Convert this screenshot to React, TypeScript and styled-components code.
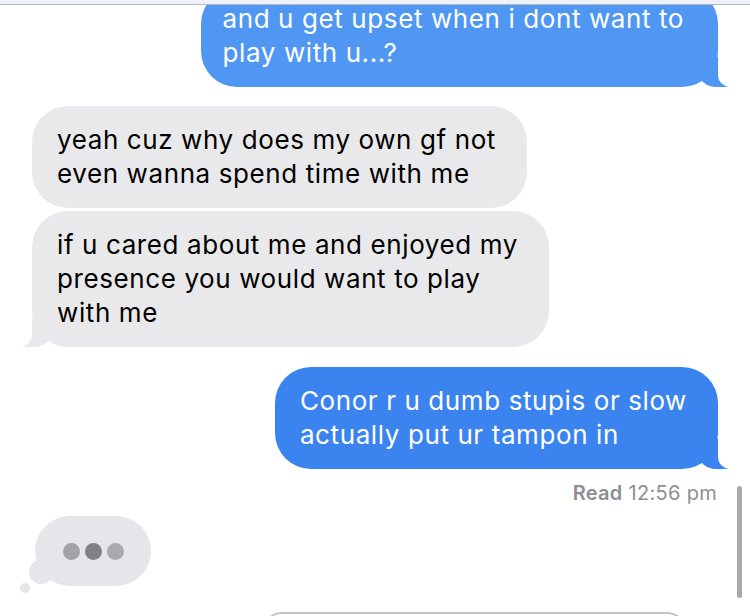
import React from "react";
import styled, { createGlobalStyle, css } from "styled-components";

const GlobalStyle = createGlobalStyle`
  html, body {
    margin: 0;
    padding: 0;
    background: #ffffff;
    overflow: hidden;
  }
  body {
    font-family: Inter, "Noto Sans", "Liberation Sans", sans-serif;
  }
`;

const Screen = styled.div`
  position: relative;
  width: 750px;
  height: 616px;
  overflow: hidden;
  background: #fff;
  display: flex;
  flex-direction: column;
`;

const TopBar = styled.div`
  position: relative;
  z-index: 5;
  height: 4px;
  flex-shrink: 0;
  background: #eef2f8;
  border-bottom: 1px solid #b4b8bf;
`;

const Thread = styled.div`
  display: flex;
  flex-direction: column;
  padding: 0 32px;
`;

const Row = styled.div<{ $mine?: boolean; $gap?: number }>`
  display: flex;
  justify-content: ${(p) => (p.$mine ? "flex-end" : "flex-start")};
  margin-top: ${(p) => p.$gap ?? 0}px;
`;

const Bubble = styled.div<{ $mine?: boolean; $tail?: boolean; $shade?: string }>`
  position: relative;
  padding: 17px 31px 17px 25px;
  border-radius: 36px;
  font-size: 26px;
  line-height: 34px;
  letter-spacing: 0.6px;
  background: ${(p) => (p.$mine ? p.$shade ?? "#3f86f1" : "#e9e9eb")};
  color: ${(p) => (p.$mine ? "#ffffff" : "#000000")};

  ${(p) =>
    p.$tail &&
    p.$mine &&
    css`
      &::before {
        content: "";
        position: absolute;
        bottom: 0;
        right: -10px;
        width: 30px;
        height: 30px;
        background: ${p.$shade ?? "#3f86f1"};
        border-bottom-left-radius: 18px 16px;
      }
      &::after {
        content: "";
        position: absolute;
        bottom: 0;
        right: -30px;
        width: 30px;
        height: 30px;
        background: #fff;
        border-bottom-left-radius: 13px 12px;
      }
    `}

  ${(p) =>
    p.$tail &&
    !p.$mine &&
    css`
      &::before {
        content: "";
        position: absolute;
        bottom: 0;
        left: -10px;
        width: 30px;
        height: 30px;
        background: #e9e9eb;
        border-bottom-right-radius: 18px 16px;
      }
      &::after {
        content: "";
        position: absolute;
        bottom: 0;
        left: -30px;
        width: 30px;
        height: 30px;
        background: #fff;
        border-bottom-right-radius: 13px 12px;
      }
    `}
`;

const Text = styled.span`
  position: relative;
  z-index: 1;
  white-space: nowrap;
`;

const TopBubble = styled(Bubble)`
  margin-top: -17px;
  padding: 14px 34px 17px 22px;
`;

const Receipt = styled.div`
  margin-top: 11px;
  text-align: right;
  font-size: 20px;
  line-height: 26px;
  letter-spacing: 0.3px;
  color: #8e8e93;
  padding-right: 1px;

  b {
    font-weight: 600;
  }
`;

const TypingWrap = styled.div`
  position: relative;
  margin-top: 10px;
  width: 130px;
  height: 78px;
`;

const TypingBubble = styled.div`
  position: absolute;
  left: 3px;
  top: 0;
  width: 116px;
  height: 70px;
  border-radius: 35px;
  background: #e5e5ea;
  display: flex;
  align-items: center;
  justify-content: center;
  gap: 5px;
`;

const Dot = styled.span<{ $tone: string }>`
  width: 17px;
  height: 17px;
  border-radius: 50%;
  background: ${(p) => p.$tone};
`;

const Puff = styled.span<{ $size: number; $x: number; $y: number }>`
  position: absolute;
  width: ${(p) => p.$size}px;
  height: ${(p) => p.$size}px;
  left: ${(p) => p.$x}px;
  top: ${(p) => p.$y}px;
  border-radius: 50%;
  background: #e5e5ea;
`;

const Composer = styled.div`
  margin: 18px 0 0 230px;
  width: 421px;
  height: 40px;
  flex-shrink: 0;
  border: 2px solid #c6c6c9;
  border-radius: 20px;
`;

const ScrollBar = styled.div`
  position: absolute;
  right: 8px;
  top: 486px;
  width: 5px;
  height: 112px;
  border-radius: 3px;
  background: #a9a9ac;
`;

export default function App() {
  return (
    <Screen>
      <GlobalStyle />
      <TopBar />
      <Thread>
        <Row $mine>
          <TopBubble $mine $tail $shade="#4f97f3">
            <Text>
              and u get upset when i dont want to
              <br />
              play with u...?
            </Text>
          </TopBubble>
        </Row>

        <Row $gap={19}>
          <Bubble>
            <Text>
              yeah cuz why does my own gf not
              <br />
              even wanna spend time with me
            </Text>
          </Bubble>
        </Row>

        <Row $gap={3}>
          <Bubble $tail>
            <Text>
              if u cared about me and enjoyed my
              <br />
              presence you would want to play
              <br />
              with me
            </Text>
          </Bubble>
        </Row>

        <Row $mine $gap={20}>
          <Bubble $mine $tail $shade="#3b84f0">
            <Text>
              Conor r u dumb stupis or slow
              <br />
              actually put ur tampon in
            </Text>
          </Bubble>
        </Row>

        <Receipt>
          <b>Read</b> 12:56 pm
        </Receipt>

        <TypingWrap>
          <TypingBubble>
            <Dot $tone="#a2a2a7" />
            <Dot $tone="#808085" />
            <Dot $tone="#a9a9ae" />
          </TypingBubble>
          <Puff $size={24} $x={-3} $y={44} />
          <Puff $size={10} $x={-12} $y={67} />
        </TypingWrap>

        <Composer />
      </Thread>
      <ScrollBar />
    </Screen>
  );
}
